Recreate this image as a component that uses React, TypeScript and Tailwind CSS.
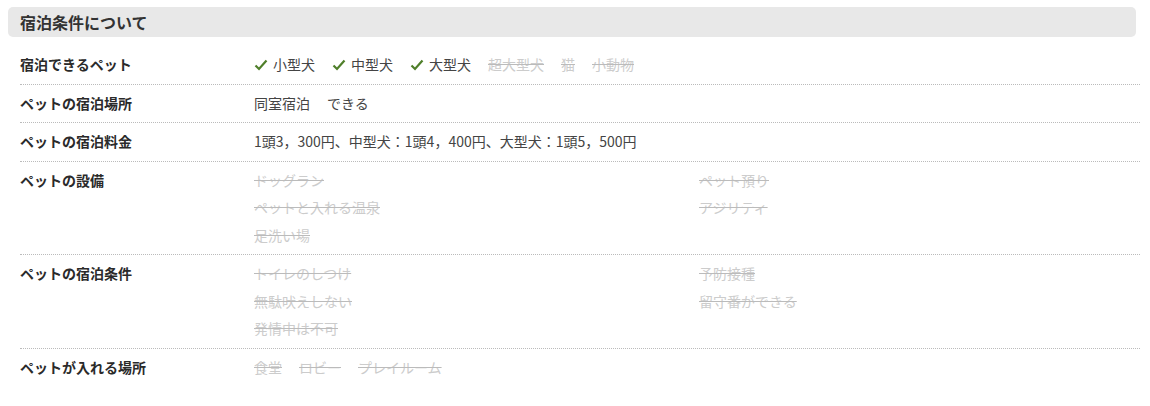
import React from "react";

type Item = { label: string; on: boolean };

const Check = () => (
  <svg width="14" height="12" viewBox="0 0 14 12" className="mr-[5px] shrink-0">
    <path d="M1.5 6.5 L5 10 L12.5 1.5" fill="none" stroke="#4f7f2a" strokeWidth="2.2" />
  </svg>
);

function Inline({ items, checks }: { items: Item[]; checks?: boolean }) {
  return (
    <div className="flex flex-wrap gap-x-[17px]">
      {items.map((it) => (
        <span
          key={it.label}
          className={
            it.on
              ? "flex items-center text-[#444]"
              : "text-[#ccc] line-through decoration-[#bbb]"
          }
        >
          {checks && it.on && <Check />}
          {it.label}
        </span>
      ))}
    </div>
  );
}

function Columns({ left, right }: { left: Item[]; right: Item[] }) {
  const col = (list: Item[]) => (
    <div className="flex flex-col gap-y-[8px]">
      {list.map((it) => (
        <span
          key={it.label}
          className={it.on ? "text-[#444]" : "text-[#ccc] line-through decoration-[#bbb]"}
        >
          {it.label}
        </span>
      ))}
    </div>
  );
  return (
    <div className="grid grid-cols-[445px_1fr]">
      {col(left)}
      {col(right)}
    </div>
  );
}

function Row({ label, children, last }: { label: string; children: React.ReactNode; last?: boolean }) {
  return (
    <div
      className={
        "flex py-[9px] leading-[19.5px] " +
        (last ? "" : "border-b border-dotted border-[#bbb]")
      }
    >
      <div className="w-[234px] shrink-0 font-bold text-[#2a2a2a]">{label}</div>
      <div className="flex-1">{children}</div>
    </div>
  );
}

const off = (label: string): Item => ({ label, on: false });
const on = (label: string): Item => ({ label, on: true });

export default function App() {
  return (
    <div
      className="w-[1150px] h-[406px] bg-white pt-[7px] text-[14px]"
      style={{ fontFamily: '"Noto Sans CJK JP", "Noto Sans", sans-serif' }}
    >
      <div className="mx-[8px] w-[1128px] h-[30px] rounded-[5px] bg-[#e8e8e8] px-[12px] flex items-center">
        <h2 className="text-[16px] font-bold text-[#333]">宿泊条件について</h2>
      </div>

      <div className="ml-[20px] w-[1120px] mt-[9px]">
        <Row label="宿泊できるペット">
          <Inline
            checks
            items={[on("小型犬"), on("中型犬"), on("大型犬"), off("超大型犬"), off("猫"), off("小動物")]}
          />
        </Row>
        <Row label="ペットの宿泊場所">
          <Inline items={[on("同室宿泊"), on("できる")]} />
        </Row>
        <Row label="ペットの宿泊料金">
          <span className="text-[#444]">1頭3，300円、中型犬：1頭4，400円、大型犬：1頭5，500円</span>
        </Row>
        <Row label="ペットの設備">
          <Columns
            left={[off("ドッグラン"), off("ペットと入れる温泉"), off("足洗い場")]}
            right={[off("ペット預り"), off("アジリティ")]}
          />
        </Row>
        <Row label="ペットの宿泊条件">
          <Columns
            left={[off("トイレのしつけ"), off("無駄吠えしない"), off("発情中は不可")]}
            right={[off("予防接種"), off("留守番ができる")]}
          />
        </Row>
        <Row label="ペットが入れる場所" last>
          <Inline items={[off("食堂"), off("ロビー"), off("プレイルーム")]} />
        </Row>
      </div>
    </div>
  );
}
